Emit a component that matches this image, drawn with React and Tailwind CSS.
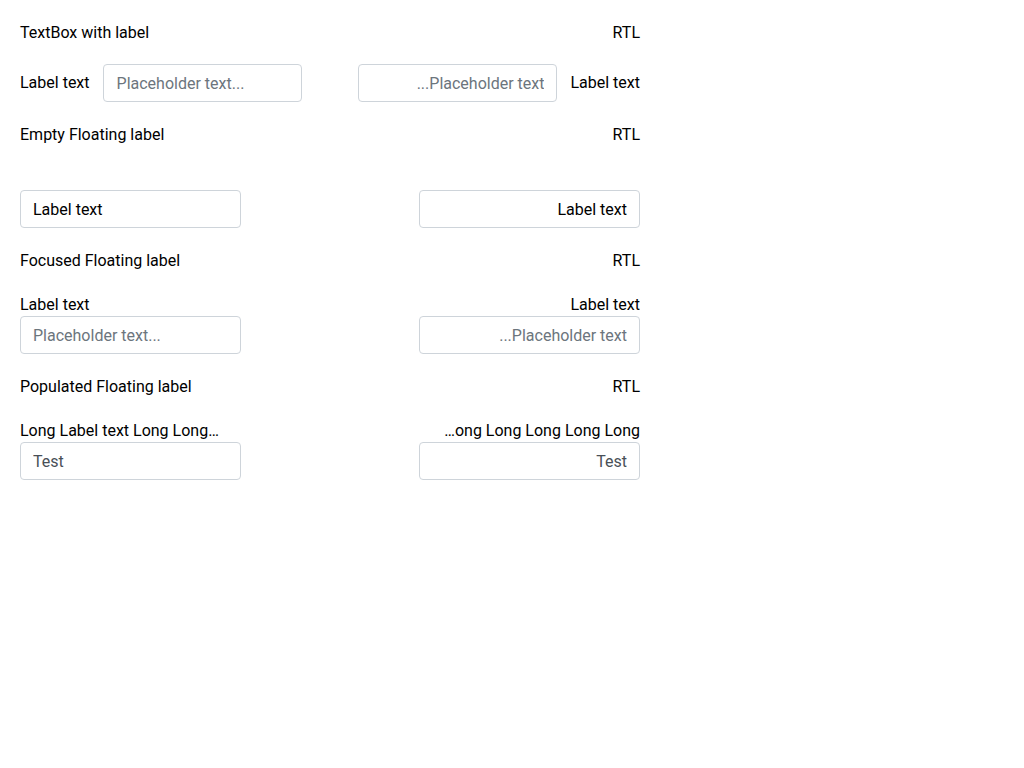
import React from 'react'

const font = { fontFamily: 'Roboto, "Liberation Sans", sans-serif' }

const inputCls =
  'h-[38px] rounded border border-[#ced4da] bg-white px-3 text-base text-[#495057] placeholder-[#6c757d] outline-none'

const Title = ({ children }) => (
  <div className="flex h-6 justify-between leading-[26px] text-black">
    <span>{children}</span>
    <span>RTL</span>
  </div>
)

const Floating = ({ label, value, placeholder, showLabel, labelInside, rtl }) => (
  <div dir={rtl ? 'rtl' : 'ltr'} className="flex w-[221px] flex-col">
    <div className={`h-6 max-w-[199px] truncate leading-[26px] text-black ${showLabel ? '' : 'invisible'}`}>
      {label}
    </div>
    {labelInside ? (
      <div className={`${inputCls} flex items-center pt-[2px] text-black`}>{label}</div>
    ) : (
      <input
        dir={rtl ? 'rtl' : 'ltr'}
        readOnly
        value={value}
        placeholder={placeholder}
        className={`${inputCls} w-full`}
      />
    )}
  </div>
)

const App = () => {
  const longLabel = 'Long Label text Long Long Long Long Long Long Long'
  return (
    <div style={font} className="flex w-[660px] flex-col gap-5 p-5 text-base">
      <Title>TextBox with label</Title>
      <div className="flex justify-between">
        <div className="flex items-center gap-[13px]">
          <span className="text-black">Label text</span>
          <input readOnly placeholder="Placeholder text..." className={`${inputCls} w-[199px] pl-[13px]`} />
        </div>
        <div dir="rtl" className="flex items-center gap-[13px]">
          <span className="text-black">Label text</span>
          <input dir="rtl" readOnly placeholder="Placeholder text..." className={`${inputCls} w-[199px]`} />
        </div>
      </div>

      <Title>Empty Floating label</Title>
      <div className="flex justify-between">
        <Floating label="Label text" labelInside />
        <Floating label="Label text" labelInside rtl />
      </div>

      <Title>Focused Floating label</Title>
      <div className="flex justify-between">
        <Floating label="Label text" showLabel placeholder="Placeholder text..." value="" />
        <Floating label="Label text" showLabel placeholder="Placeholder text..." value="" rtl />
      </div>

      <Title>Populated Floating label</Title>
      <div className="flex justify-between">
        <Floating label={longLabel} showLabel value="Test" />
        <Floating label={longLabel} showLabel value="Test" rtl />
      </div>
    </div>
  )
}

export default App
